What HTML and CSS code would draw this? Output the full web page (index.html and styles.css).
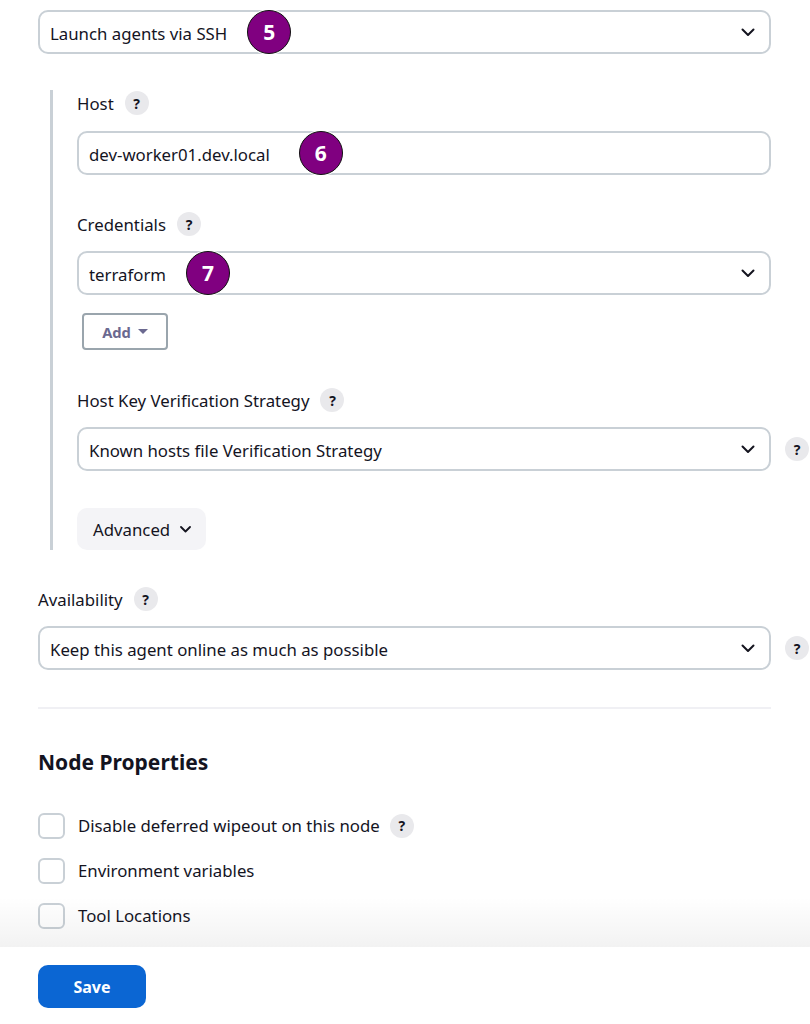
FILE: index.html
```html
<!DOCTYPE html>
<html>
<head>
<meta charset="utf-8">
<link rel="stylesheet" href="styles.css">
</head>
<body>
<div class="page">
  <div class="row">
    <div class="control select">
      <span class="value">Launch agents via SSH</span>
      <span class="badge">5</span>
      <svg class="chev" width="14" height="9" viewBox="0 0 14 9"><path d="M1.5 1.5 L7 7 L12.5 1.5" fill="none" stroke="#14141f" stroke-width="2" stroke-linecap="round" stroke-linejoin="round"/></svg>
    </div>
  </div>

  <div class="nested">
    <div class="label">Host <span class="help">?</span></div>
    <div class="row">
      <div class="control">
        <span class="value">dev-worker01.dev.local</span>
        <span class="badge badge-wide">6</span>
      </div>
    </div>

    <div class="label gap">Credentials <span class="help">?</span></div>
    <div class="row">
      <div class="control select">
        <span class="value">terraform</span>
        <span class="badge">7</span>
        <svg class="chev" width="14" height="9" viewBox="0 0 14 9"><path d="M1.5 1.5 L7 7 L12.5 1.5" fill="none" stroke="#14141f" stroke-width="2" stroke-linecap="round" stroke-linejoin="round"/></svg>
      </div>
    </div>
    <button class="add">Add <span class="caret"></span></button>

    <div class="label gap">Host Key Verification Strategy <span class="help">?</span></div>
    <div class="row">
      <div class="control select">
        <span class="value">Known hosts file Verification Strategy</span>
        <svg class="chev" width="14" height="9" viewBox="0 0 14 9"><path d="M1.5 1.5 L7 7 L12.5 1.5" fill="none" stroke="#14141f" stroke-width="2" stroke-linecap="round" stroke-linejoin="round"/></svg>
      </div>
      <span class="help side">?</span>
    </div>

    <button class="advanced">Advanced
      <svg width="11" height="7" viewBox="0 0 11 7"><path d="M1 1 L5.5 5.5 L10 1" fill="none" stroke="#14141f" stroke-width="1.8" stroke-linecap="round" stroke-linejoin="round"/></svg>
    </button>
  </div>

  <div class="label avail">Availability <span class="help">?</span></div>
  <div class="row">
    <div class="control select">
      <span class="value">Keep this agent online as much as possible</span>
      <svg class="chev" width="14" height="9" viewBox="0 0 14 9"><path d="M1.5 1.5 L7 7 L12.5 1.5" fill="none" stroke="#14141f" stroke-width="2" stroke-linecap="round" stroke-linejoin="round"/></svg>
    </div>
    <span class="help side">?</span>
  </div>

  <hr class="sep">

  <h2 class="heading">Node Properties</h2>

  <div class="checks">
    <label class="check"><span class="box"></span>Disable deferred wipeout on this node <span class="help">?</span></label>
    <label class="check"><span class="box"></span>Environment variables</label>
    <label class="check"><span class="box"></span>Tool Locations</label>
  </div>
</div>

<div class="footer">
  <button class="save">Save</button>
</div>
</body>
</html>
```

FILE: styles.css
```css
* { box-sizing: border-box; }
html, body {
  margin: 0;
  padding: 0;
  background: #fff;
}
body {
  font-family: "Noto Sans", "Open Sans", sans-serif;
  font-size: 16.8px;
  color: #14141f;
  width: 810px;
  height: 1024px;
  overflow: hidden;
  position: relative;
}
.page {
  padding: 10px 0 0 38px;
}
.row {
  display: grid;
  grid-template-columns: 1fr 39px;
  align-items: center;
}
.control {
  position: relative;
  height: 44px;
  border: 2px solid #c9d0d6;
  border-radius: 10px;
  display: flex;
  align-items: center;
  padding: 0 10px;
  background: #fff;
}
.value {
  line-height: 24px;
  padding-top: 3px;
}
.chev {
  position: absolute;
  right: 14px;
  top: 16px;
}
.badge {
  display: inline-flex;
  align-items: center;
  justify-content: center;
  width: 44px;
  height: 44px;
  margin-left: 20px;
  border-radius: 50%;
  background: #800080;
  border: 1.5px solid #111;
  box-shadow: 0 0 0 1px #fff;
  color: #fff;
  font-weight: 700;
  font-size: 21px;
}
.badge-wide {
  margin-left: 29px;
}
.nested {
  margin: 36px 0 0 12px;
  border-left: 3px solid #c9d0d6;
  padding: 1px 0 0 24px;
  width: 760px;
}
.label {
  display: flex;
  align-items: center;
  gap: 11px;
  height: 24px;
  margin-bottom: 16px;
}
.label.gap { margin-top: 37px; margin-bottom: 15px; }
.label.avail { margin-top: 37px; margin-bottom: 15px; }
.help {
  display: inline-flex;
  align-items: center;
  justify-content: center;
  width: 24px;
  height: 24px;
  border-radius: 50%;
  background: #e9e9ec;
  color: #14141f;
  font-weight: 700;
  font-size: 14px;
  font-family: "Noto Sans", sans-serif;
}
.help.side {
  justify-self: end;
  margin-right: 1px;
}
.add {
  margin: 18px 0 0 5px;
  width: 86px;
  height: 37px;
  border: 2px solid #9aa5ad;
  border-radius: 4px;
  background: #fff;
  font-family: inherit;
  font-size: 14.7px;
  font-weight: 700;
  color: #6b6990;
  display: flex;
  align-items: center;
  justify-content: center;
  gap: 7px;
  padding: 0;
}
.caret {
  width: 0;
  height: 0;
  border-left: 5px solid transparent;
  border-right: 5px solid transparent;
  border-top: 5px solid #6b6990;
}
.nested .add + .label { margin-top: 38px; }
.advanced {
  margin-top: 37px;
  height: 42px;
  width: 129px;
  border: none;
  border-radius: 10px;
  background: #f4f4f7;
  font-family: inherit;
  font-size: 16.8px;
  color: #14141f;
  display: flex;
  align-items: center;
  padding: 0 0 0 16px;
  gap: 10px;
}
.sep {
  margin: 37px 39px 0 0;
  border: none;
  height: 2px;
  background: #f0f0f4;
}
.heading {
  margin: 39px 0 0;
  font-size: 21px;
  font-weight: 700;
  line-height: 28px;
}
.checks {
  margin-top: 37px;
  display: flex;
  flex-direction: column;
  gap: 19px;
}
.check {
  display: flex;
  align-items: center;
  height: 26px;
  line-height: 24px;
}
.box {
  width: 27px;
  height: 26px;
  border: 2px solid #c9d0d6;
  border-radius: 6px;
  margin-right: 13px;
  background: #fff;
}
.check .help { margin-left: 10px; }
.footer {
  position: absolute;
  left: 0;
  right: 0;
  bottom: 0;
  height: 77px;
  background: #fff;
  padding: 18px 0 0 38px;
}
.footer::before {
  content: "";
  position: absolute;
  left: 0;
  right: 0;
  top: -50px;
  height: 50px;
  background: linear-gradient(to bottom, rgba(0,0,0,0), rgba(0,0,0,0.05));
  pointer-events: none;
}
.save {
  width: 108px;
  height: 43px;
  border: none;
  border-radius: 10px;
  background: #0b66d3;
  color: #fff;
  font-family: inherit;
  font-size: 16px;
  font-weight: 700;
}
```
